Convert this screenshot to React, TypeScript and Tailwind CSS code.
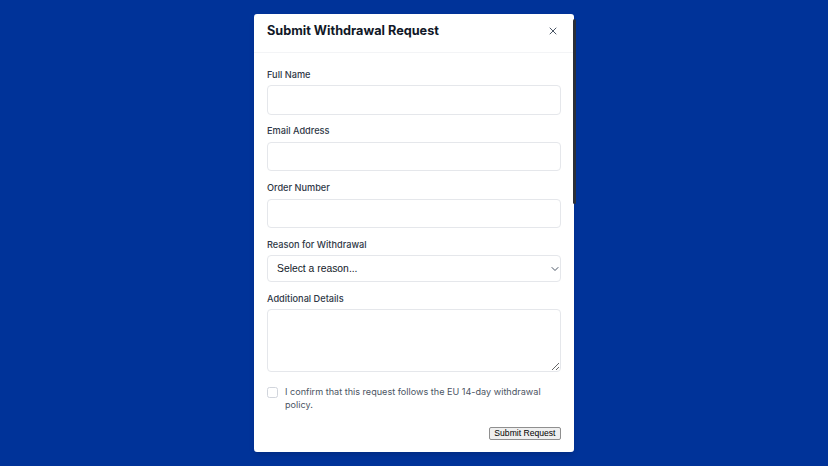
import { X, ChevronDown } from 'lucide-react'

const fields = [
  { label: 'Full Name', type: 'text' },
  { label: 'Email Address', type: 'email' },
  { label: 'Order Number', type: 'text' },
]

const labelCls = 'block text-[9.2px] leading-[13px] text-[#2f3846] font-medium mb-[4.5px]'

export default function App() {
  return (
    <div
      className="min-h-screen w-full bg-[#003399] flex items-center justify-center"
      style={{ fontFamily: 'Inter, "Noto Sans", sans-serif' }}
    >
      <div className="relative w-[320px] h-[437.5px] bg-white rounded-[3px] shadow-md flex flex-col">
        {/* thin overlay scrollbar on the right edge */}
        <div className="absolute right-[-2px] top-[5px] h-[185px] w-[3px] rounded-full bg-[#2a2f3a]" />

        <div className="shrink-0 border-b border-gray-100 flex items-center justify-between pl-[13px] pr-[15.5px] pt-[9px] pb-[13px]">
          <h2 className="text-[12.7px] leading-[16px] font-bold text-[#111827]">Submit Withdrawal Request</h2>
          <button type="button" className="text-gray-600">
            <X size={12} strokeWidth={2} />
          </button>
        </div>

        <form className="flex-1 pl-[13px] pr-[13.5px] pt-[14.5px]" onSubmit={(e) => e.preventDefault()}>
          {fields.map((f) => (
            <div key={f.label} className="mb-[9.7px]">
              <label className={labelCls}>{f.label}</label>
              <input
                type={f.type}
                className="block w-full h-[29.5px] rounded-[4px] border border-gray-200 px-2 text-[10px] outline-none"
              />
            </div>
          ))}

          <div className="mb-[9.5px]">
            <label className={labelCls}>Reason for Withdrawal</label>
            <div className="relative">
              <select
                className="appearance-none block w-full h-[27px] rounded-[4px] border border-gray-200 pl-[9px] text-[10.35px] text-[#111827] bg-white outline-none"
                style={{ fontFamily: '"Liberation Sans", Arial, sans-serif' }}
                defaultValue=""
              >
                <option value="">Select a reason...</option>
              </select>
              <ChevronDown
                size={12}
                strokeWidth={2}
                className="absolute right-[0px] top-[7.5px] text-gray-600 pointer-events-none"
              />
            </div>
          </div>

          <div className="mb-[12.5px]">
            <label className={labelCls}>Additional Details</label>
            <textarea className="block w-full h-[63px] rounded-[4px] border border-gray-200 px-2 text-[10px] outline-none resize-y" />
          </div>

          <label className="flex items-start gap-[7.5px]">
            <span className="mt-[2.5px] w-[10.5px] h-[10.5px] shrink-0 rounded-[2.5px] border border-gray-300 bg-white" />
            <span className="text-[9.1px] leading-[13px] text-[#4b5563]">
              I confirm that this request follows the EU 14-day withdrawal policy.
            </span>
          </label>

          <div className="flex justify-end mt-[16px]">
            <button
              type="submit"
              className="h-[13.5px] px-[4px] border border-[#8f8f8f] rounded-[2px] bg-[#efefef] text-[8.6px] leading-none text-black"
              style={{ fontFamily: '"Liberation Sans", Arial, sans-serif' }}
            >
              Submit Request
            </button>
          </div>
        </form>
      </div>
    </div>
  )
}
